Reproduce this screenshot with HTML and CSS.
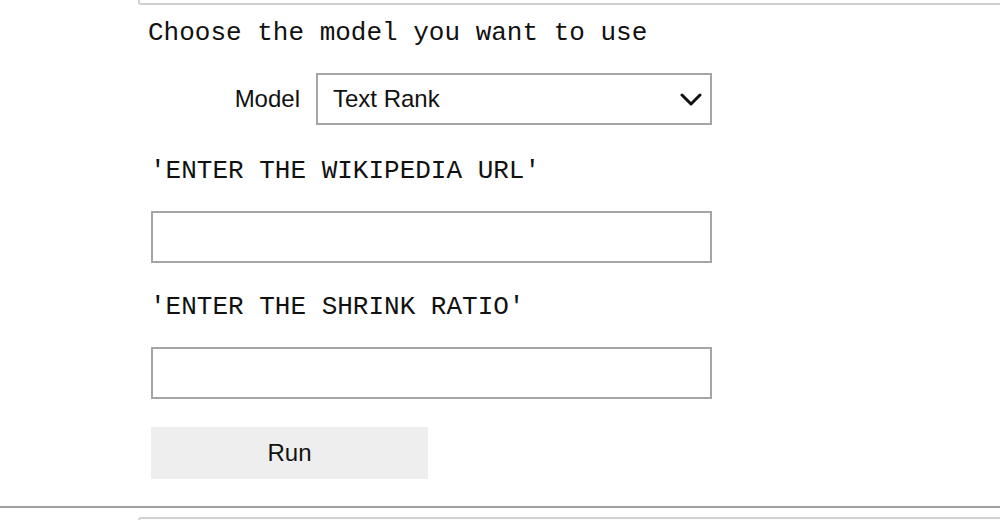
FILE: index.html
```html
<!DOCTYPE html>
<html>
<head>
<meta charset="utf-8">
<link rel="stylesheet" href="styles.css">
</head>
<body>
<div class="prev-cell"></div>
<div class="form">
  <div class="mono heading">Choose the model you want to use</div>
  <div class="row">
    <label class="label">Model</label>
    <div class="select">
      <span>Text Rank</span>
      <svg class="chev" width="22" height="13" viewBox="0 0 22 13"><polyline points="2,2 11,11 20,2" fill="none" stroke="#111" stroke-width="3" stroke-linecap="round" stroke-linejoin="round"/></svg>
    </div>
  </div>
  <div class="mono caption">'ENTER THE WIKIPEDIA URL'</div>
  <input class="text" type="text">
  <div class="mono caption">'ENTER THE SHRINK RATIO'</div>
  <input class="text" type="text">
  <button class="run">Run</button>
</div>
<div class="divider"></div>
<div class="next-cell"></div>
</body>
</html>
```
FILE: styles.css
```css
html, body {
  margin: 0;
  padding: 0;
  background: #fff;
  width: 1000px;
  height: 520px;
  overflow: hidden;
}
.prev-cell {
  margin-left: 138px;
  height: 3px;
  border-left: 2px solid #d0d0d0;
  border-bottom: 2px solid #d0d0d0;
  border-bottom-left-radius: 3px;
}
.form {
  display: flex;
  flex-direction: column;
  align-items: flex-start;
  padding-left: 148px;
}
.mono {
  font-family: "Liberation Mono", "Courier New", monospace;
  font-size: 26px;
  line-height: 26px;
  color: #111;
}
.heading {
  margin-top: 15px;
}
.row {
  display: flex;
  align-items: center;
  margin-top: 27px;
}
.label {
  width: 152px;
  text-align: right;
  font-family: "Liberation Sans", Arial, sans-serif;
  font-size: 24px;
  color: #111;
}
.select {
  margin-left: 16px;
  box-sizing: border-box;
  width: 396px;
  height: 52px;
  border: 2px solid #a5a5a5;
  display: flex;
  align-items: center;
  justify-content: space-between;
  padding: 0 8px 0 15px;
  font-family: "Liberation Sans", Arial, sans-serif;
  font-size: 24px;
  color: #111;
}
.chev {
  display: block;
}
.caption {
  margin-top: 33px;
  margin-left: 2px;
}
.text {
  display: block;
  margin: 0;
  margin-top: 27px;
  margin-left: 3px;
  box-sizing: border-box;
  width: 561px;
  height: 52px;
  border: 2px solid #a5a5a5;
  border-radius: 0;
  padding: 0;
  background: #fff;
  outline: none;
}
.text + .caption {
  margin-top: 31px;
}
.run {
  margin-top: 28px;
  margin-left: 3px;
  width: 277px;
  height: 52px;
  border: none;
  border-radius: 0;
  background: #eeeeee;
  font-family: "Liberation Sans", Arial, sans-serif;
  font-size: 24px;
  color: #111;
  padding: 0;
}
.divider {
  margin-top: 27px;
  height: 2px;
  background: #a0a0a0;
}
.next-cell {
  margin-top: 9px;
  margin-left: 138px;
  height: 10px;
  border-top: 2px solid #d0d0d0;
  border-left: 2px solid #d0d0d0;
  border-top-left-radius: 3px;
}
```
